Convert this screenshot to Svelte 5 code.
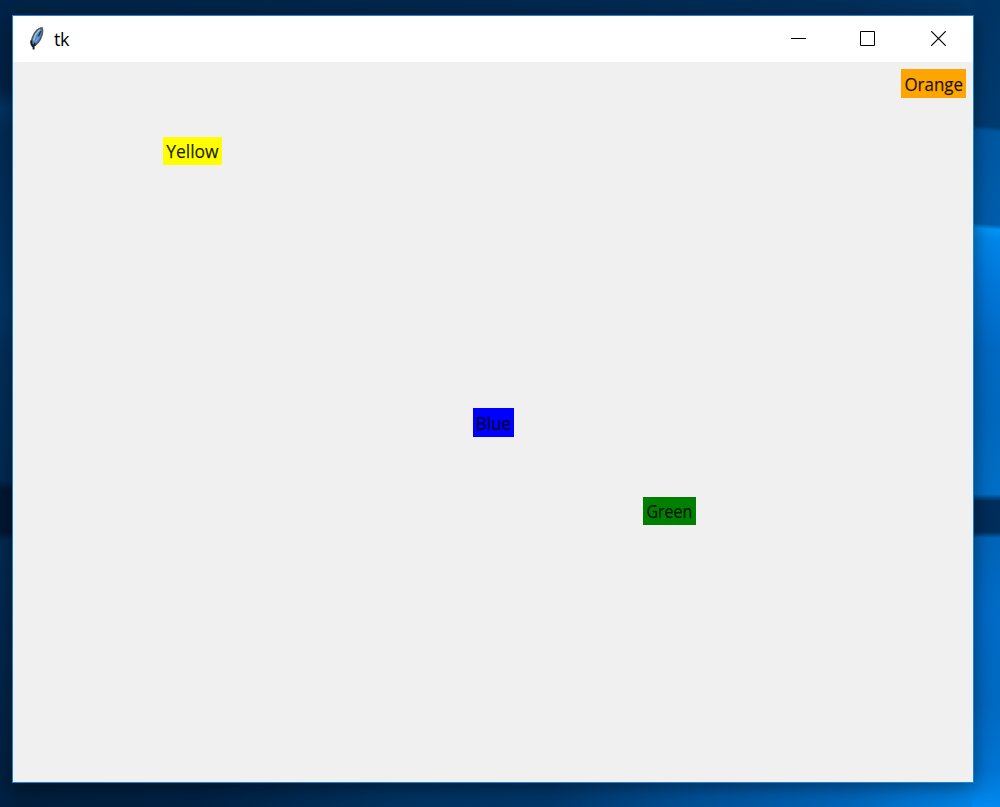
<script>
  const labels = [
    { text: 'Orange', x: 888, y: 7.4, w: 64.6, tx: 3.4, ty: 21.6, tw: 58.6, bg: '#ffa500' },
    { text: 'Yellow', x: 150.2, y: 75, w: 58.6, tx: 3.2, ty: 21.3, tw: 52.4, bg: '#ffff00' },
    { text: 'Blue', x: 460.3, y: 346.4, w: 41, tx: 2.8, ty: 21.6, tw: 35.4, bg: '#0000ff' },
    { text: 'Green', x: 630, y: 435, w: 52.5, tx: 3.4, ty: 21.3, tw: 46, bg: '#008000' }
  ];
</script>

<div class="desktop">
  <div class="edge left"></div>
  <div class="edge right"></div>
  <main class="window">
    <header class="titlebar">
      <svg class="feather" width="16" height="26" viewBox="0 0 16 26">
        <path d="M12.9 1.6C9.2 2 5.4 6.2 3.4 11.6C2.3 14.8 1.5 18.6 3.9 20.1C7.6 19.3 11.8 14.4 13.2 8.3C13.8 5.2 13.8 2.8 12.9 1.6Z" fill="#4c82bd" stroke="#555" stroke-width="1.4" />
        <path d="M11 3.8C8.1 5.7 5.6 10 4.7 14.7" fill="none" stroke="#a6bbcd" stroke-width="1.6" />
        <path d="M11.8 5C10 10 7 14 5.2 19" fill="none" stroke="#1c2e46" stroke-width="1.1" />
        <path d="M9.6 10.5L6.2 16.5" stroke="#5ba0e9" stroke-width="2" />
        <path d="M2.2 14.5Q1.8 18 3.6 20L6.4 18.4M4.6 18.8V23.4" fill="none" stroke="#1c1c1c" stroke-width="1.9" />
      </svg>
      <span class="title">tk</span>
      <div class="controls">
        <svg width="15" height="15" viewBox="0 0 15 15"><path d="M0 7.5H15" /></svg>
        <svg width="15" height="15" viewBox="0 0 15 15"><path d="M.5 .5H14.5V14.5H.5Z" /></svg>
        <svg width="15" height="15" viewBox="0 0 15 15"><path d="M.2 .2L14.8 14.8M14.8 .2L.2 14.8" stroke-width="1.2" /></svg>
      </div>
    </header>
    <section class="canvas">
      {#each labels as label}
        <div class="label" style="left:{label.x}px;top:{label.y}px;width:{label.w}px;background:{label.bg}">
          <svg width="100%" height="28.4">
            <text x={label.tx} y={label.ty} textLength={label.tw} lengthAdjust="spacingAndGlyphs">{label.text}</text>
          </svg>
        </div>
      {/each}
    </section>
  </main>
</div>

<style>
  :global(body) { margin: 0; overflow: hidden; }
  .desktop {
    position: relative;
    box-sizing: border-box;
    width: 1000px;
    height: 807px;
    padding: 15px 26px 24px 12px;
    overflow: hidden;
    font-family: "Open Sans", "Noto Sans", sans-serif;
    background:
      linear-gradient(90deg, #002345 0%, #00274d 50%, #002e5a 85%, #003868 100%) top / 100% 16px no-repeat,
      linear-gradient(90deg, #001e3c 0%, #002143 20%, #003260 40%, #00366a 55%, #005096 70%, #0064b8 85%, #0084e6 98%, #0088ec 100%);
  }
  .edge { position: absolute; top: 0; bottom: 0; }
  .left {
    left: 0;
    width: 13px;
    background: linear-gradient(180deg, #002348 0, #002347 88px, #003462 108px, #002c56 135px, #002f5b 190px, #003767 310px, #002f5a 352px, #002b54 480px, #001733 490px, #001733 532px, #002b52 541px, #00264b 660px, #001f40 807px);
  }
  .right {
    left: 972px;
    width: 28px;
    overflow: hidden;
    background: linear-gradient(180deg, #0069c2 350px, #0068bd 420px, #006fc6 494px, #002d5b 501px, #002d5b 532px, #0064b7 538px, #006bc6 610px, #0069c1 700px, #0074d3 770px, #008af0 807px);
  }
  .right::before {
    content: "";
    position: absolute;
    inset: -10px 0 auto;
    height: 360px;
    transform: skewY(5deg);
    background: linear-gradient(180deg, #003363 0, #003b70 136px, #0057a0 141px, #005dac 234px, #0094f4 239px, #0086e8 250px, #0078da 290px, #0069c2 360px);
  }
  .window {
    position: relative;
    box-sizing: border-box;
    width: 962px;
    height: 768px;
    border: 1px solid #1883d7;
    display: flex;
    flex-direction: column;
    background: #f0f0f0;
    box-shadow: 0 4px 18px rgba(0, 0, 0, .46);
  }
  .titlebar {
    flex: 0 0 46px;
    display: flex;
    align-items: center;
    background: #fff;
    padding-left: 16px;
    box-sizing: border-box;
  }
  .feather { display: block; margin-top: -1px; }
  .title { margin-left: 9px; font-size: 18px; line-height: 24px; letter-spacing: -.3px; color: #000; }
  .controls { display: flex; gap: 55px; margin: -1px 27px 0 auto; }
  .controls svg { display: block; fill: none; stroke: #000; stroke-width: 1; }
  .controls svg:nth-child(2) { margin: 0 1px 0 -1px; }
  .canvas { position: relative; flex: 1; background: #f0f0f0; }
  .label { position: absolute; height: 28.4px; }
  .label svg { display: block; overflow: visible; }
  text { font-size: 18px; fill: #000; fill-opacity: .88; stroke: #000; stroke-width: .25; stroke-opacity: .7; }
</style>
